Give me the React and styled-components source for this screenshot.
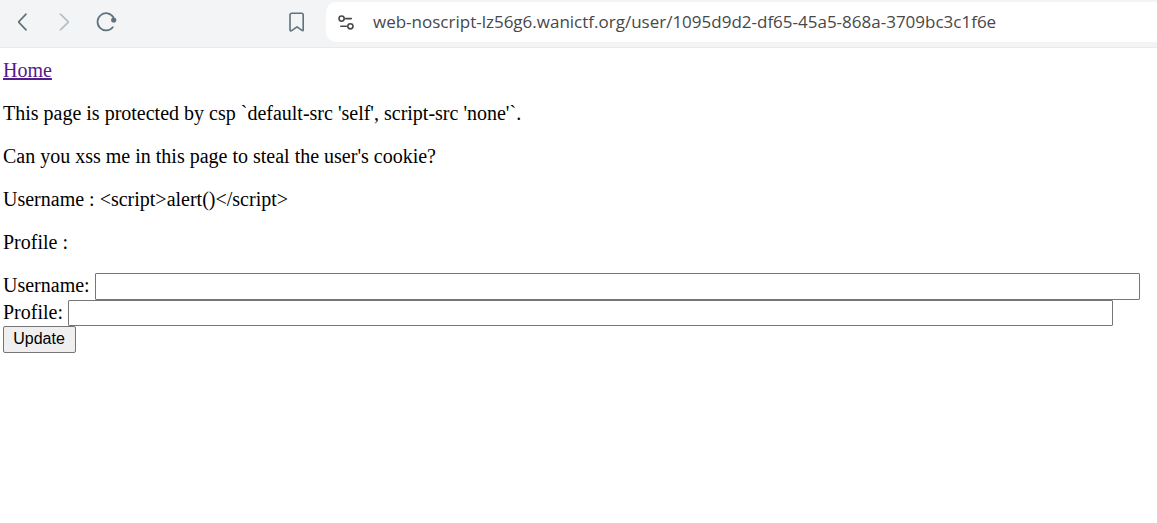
import React from "react";
import styled, { createGlobalStyle } from "styled-components";

const GlobalStyle = createGlobalStyle`
  *, *::before, *::after { box-sizing: border-box; }
  body {
    margin: 0;
    background: #fff;
    color: #000;
    font-family: "Liberation Serif", "Times New Roman", serif;
    font-size: 20px;
    line-height: 25px;
  }
`;

const Toolbar = styled.header`
  display: flex;
  align-items: center;
  height: 48px;
  padding: 0 0 4px 10px;
  background: #f3f4f6;
  border-bottom: 1px solid #e9eaec;
`;

const NavGroup = styled.nav`
  display: flex;
  flex: none;
  gap: 18px;
  width: 274px;
`;

const IconButton = styled.button`
  display: flex;
  flex: none;
  align-items: center;
  justify-content: center;
  width: 24px;
  height: 24px;
  padding: 0;
  border: 0;
  background: none;
  color: ${({ $color }) => $color || "#5f727c"};
`;

const AddressBar = styled.div`
  display: flex;
  flex: 1;
  align-items: center;
  gap: 12px;
  min-width: 0;
  height: 40px;
  margin-left: 18px;
  padding-left: 8px;
  border-radius: 10px 0 0 10px;
  background: #fff;
`;

const AddressInput = styled.input`
  flex: 1;
  min-width: 0;
  height: 32px;
  padding: 0 3px;
  border: 0;
  outline: 0;
  background: none;
  color: #47484a;
  font-family: "Open Sans", "Segoe UI", sans-serif;
  font-size: 17px;
`;

const Page = styled.main`
  padding: 10px 0 20px 3px;
`;

const HomeLink = styled.a`
  color: #551a8b;
  text-decoration: underline;
`;

const Paragraph = styled.p`
  margin: 18px 0;
`;

const Field = styled.div`
  display: flex;
  align-items: flex-start;
  gap: 5px;
`;

const FieldLabel = styled.label`
  flex: none;
`;

const TextInput = styled.input`
  flex: none;
  width: calc(100% - 109px);
  height: ${({ $height }) => $height}px;
  padding: 1px 2px;
  border: 1px solid #767676;
  border-radius: 1px;
  background: #fff;
  font-family: "Liberation Sans", Arial, sans-serif;
  font-size: 17px;
`;

const SubmitButton = styled.button`
  display: block;
  min-width: 73px;
  height: 27px;
  padding: 0 9px 2px 8px;
  border: 1px solid #767676;
  border-radius: 2px;
  background: #efefef;
  color: #000;
  font-family: "Liberation Sans", Arial, sans-serif;
  font-size: 16px;
  line-height: 23px;
`;

const Icon = ({ children, width = 2 }) => (
  <svg
    width="24"
    height="24"
    viewBox="0 0 24 24"
    fill="none"
    stroke="currentColor"
    strokeWidth={width}
    strokeLinecap="round"
    strokeLinejoin="round"
    aria-hidden="true"
  >
    {children}
  </svg>
);

export default function App() {
  return (
    <>
      <GlobalStyle />
      <Toolbar>
        <NavGroup aria-label="Browser navigation">
          <IconButton type="button" aria-label="Back">
            <Icon width={1.7}>
              <path d="M16 4.2 9.1 11.3Q8.4 12 9.1 12.7L16 19.8" />
            </Icon>
          </IconButton>
          <IconButton type="button" aria-label="Forward" $color="#b5bec3">
            <Icon width={1.7}>
              <path d="M8.4 4.2 15.9 11.3Q16.6 12 15.9 12.7L8.4 19.8" />
            </Icon>
          </IconButton>
          <IconButton type="button" aria-label="Reload">
            <Icon width={1.7}>
              <path d="M19.4 7.2A8.6 8.6 0 1 0 18.8 17.2" />
              <circle cx="19.7" cy="10" r="2.6" fill="currentColor" stroke="none" />
            </Icon>
          </IconButton>
        </NavGroup>
        <IconButton type="button" aria-label="Bookmark">
          <Icon width={1.6}>
            <path d="M8 3.2H17.4Q19.2 3.2 19.2 5V19.8Q19.2 21.3 18 20.4L13 16.9 7.6 20.6Q6 21.4 6 19.7V5Q6 3.2 8 3.2Z" />
          </Icon>
        </IconButton>
        <AddressBar>
          <IconButton type="button" aria-label="Site information" $color="#47494b">
            <Icon width={1.6}>
              <circle cx="7.6" cy="8.6" r="2.6" />
              <path d="M11.6 8.6H17.3" />
              <circle cx="16.4" cy="16.3" r="2.6" />
              <path d="M6.8 16.3H12.4" />
            </Icon>
          </IconButton>
          <AddressInput
            aria-label="Address"
            spellCheck={false}
            defaultValue="web-noscript-lz56g6.wanictf.org/user/1095d9d2-df65-45a5-868a-3709bc3c1f6e"
          />
        </AddressBar>
      </Toolbar>
      <Page>
        <HomeLink href="/">Home</HomeLink>
        <Paragraph>This page is protected by csp `default-src 'self', script-src 'none'`.</Paragraph>
        <Paragraph>Can you xss me in this page to steal the user's cookie?</Paragraph>
        <Paragraph>Username : {"<script>alert()</script>"}</Paragraph>
        <Paragraph>Profile :</Paragraph>
        <form onSubmit={(event) => event.preventDefault()}>
          <Field>
            <FieldLabel htmlFor="username">Username:</FieldLabel>
            <TextInput id="username" name="username" type="text" $height={27} />
          </Field>
          <Field>
            <FieldLabel htmlFor="profile">Profile:</FieldLabel>
            <TextInput id="profile" name="profile" type="text" $height={26} />
          </Field>
          <SubmitButton type="submit">Update</SubmitButton>
        </form>
      </Page>
    </>
  );
}
